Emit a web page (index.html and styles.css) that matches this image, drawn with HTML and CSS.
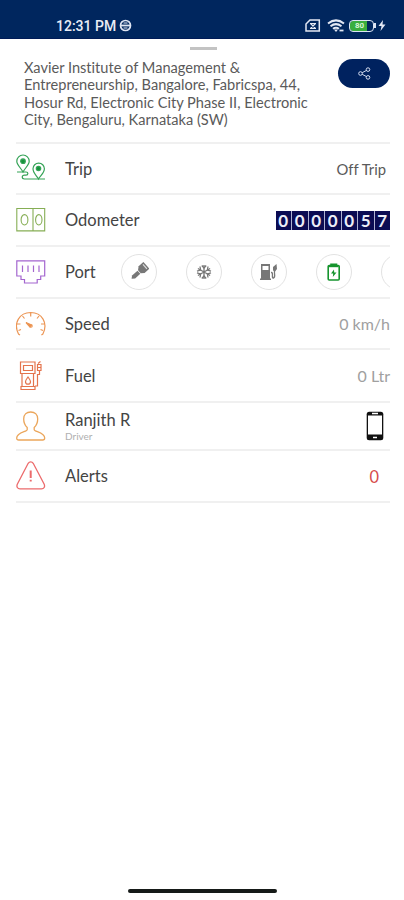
FILE: index.html
```
<!DOCTYPE html>
<html lang="en">
<head>
<meta charset="utf-8">
<title>Vehicle details</title>
<link rel="stylesheet" href="styles.css">
</head>
<body>
<div class="phone">
  <header class="status">
    <span class="clock">12:31 PM</span>
    <svg class="globe" width="13" height="13" viewBox="0 0 13 13" fill="none" stroke="#dfe5f3" stroke-width="1.7"><circle cx="6.5" cy="6.5" r="5"/><path d="M1 6.500h11" stroke-width="1.800"/><path d="M4.500 4h4M4.500 9h4" stroke-width="1"/></svg>
    <div class="indicators">
      <svg width="16" height="13" viewBox="0 0 16 13" fill="none" stroke="#e3e8f4" stroke-width="1.5"><path d="M5 1h9.300v11H1V5z"/><path d="M5.500 4.500l5 5M10.500 4.500l-5 5M5 4.500h6M5 9.500h6" stroke-width="1.200"/></svg>
      <svg class="wifi" width="18" height="14" viewBox="0 0 18 14" fill="none" stroke="#e3e8f4" stroke-width="2"><path d="M1 4.500Q9-1.700 17 4.500M3.500 7.200Q9 3 14.500 7.200M6 9.800Q9 7.600 12 9.800"/><path d="M7 10.500L9 13l2-2.500z" fill="#e3e8f4" stroke="none"/><path d="M12.500 11.500h4" stroke-width="1.800"/></svg>
      <span class="battery"><span class="charge">80</span></span>
      <svg class="bolt" width="8" height="11" viewBox="0 0 8 11" fill="#e3e8f4"><path d="M5 0L.5 6H3.500L2.500 11 7.500 4.500H4.500z"/></svg>
    </div>
  </header>
  <div class="handle"></div>
  <main>
    <section class="place">
      <p class="address">Xavier Institute of Management &amp;<br>Entrepreneurship, Bangalore, Fabricspa, 44,<br>Hosur Rd, Electronic City Phase II, Electronic<br>City, Bengaluru, Karnataka (SW)</p>
      <button class="share" aria-label="Share"><svg width="13" height="13" viewBox="0 0 13 13" fill="none" stroke="#d5ddf0" stroke-width="1"><circle cx="2.500" cy="6.500" r="1.800"/><circle cx="10" cy="2.600" r="1.800"/><circle cx="10" cy="10.400" r="1.800"/><path d="M4.200 5.700l4.100-2.200M4.200 7.300l4.100 2.200"/></svg></button>
    </section>
    <section class="row trip">
      <svg class="icon" viewBox="0 0 30 30" fill="none" stroke="#35a357" stroke-width="1.200"><path d="M7 18C5 14 .8 11 .8 7.200a6.200 6.200 0 0 1 12.400 0C13.200 11 9 14 7 18z"/><circle cx="7" cy="7.200" r="2.300" fill="#15933b"/><path d="M22.500 25C20.500 21.500 17 19 17 14.800a5.700 5.700 0 0 1 11.400 0C28.400 19 24.500 21.500 22.500 25z"/><circle cx="22.500" cy="14.500" r="2.200" fill="#15933b"/><path d="M1 18H10c2.500 0 2.500 3.200 0 3.200H8.500c-3 0-3 3.800 0 3.800H29"/></svg>
      <span class="label">Trip</span><span class="off">Off Trip</span>
    </section>
    <section class="row odometer">
      <svg class="icon" viewBox="0 0 30 30" fill="none" stroke="#86ae55" stroke-width="1.100"><path d="M.8 3.500h27.900v22.400H.8zM17 3.500v22.400"/><ellipse cx="8.500" cy="14.800" rx="3.400" ry="5.200"/><ellipse cx="22.800" cy="14.800" rx="3.200" ry="5.200"/></svg>
      <span class="label">Odometer</span>
      <div class="digits"><b>0</b><b>0</b><b>0</b><b>0</b><b>0</b><b>5</b><b>7</b></div>
    </section>
    <section class="row port">
      <svg class="icon" viewBox="0 0 30 30" fill="none" stroke="#a466cf" stroke-width="1.200"><path d="M.8 3.800h27.900V19h-4v3.500h-3.500V26H8.500v-3.500H5V19H.8zM6.500 8.500v6.500M12 8.500v6.500M17.500 8.500v6.500M23 8.500v6.500"/></svg>
      <span class="label">Port</span>
      <div class="ports">
        <span class="chip"><svg width="20" height="20" viewBox="0 0 20 20" fill="#777"><g transform="rotate(48 10 10)"><path d="M5.500 0h9v6.500l-2.500 3H8l-2.500-3z"/><path d="M7 2h6" stroke="#ddd" stroke-width="1.200"/><path d="M8 10.200h4.200v7L10 20l-2-2.500z"/></g></svg></span>
        <span class="chip"><svg width="18" height="18" viewBox="0 0 18 18" fill="none" stroke="#777" stroke-width="1.300"><path d="M9 2v14M2.900 5.500l12.200 7M15.100 5.500l-12.200 7"/><path d="M6.800 2.500L9 5l2.200-2.500M6.800 15.500L9 13l2.200 2.500M2 8.200l3.600-1.200L5 3.500M16 9.800l-3.600 1.200.6 3.500M16 8.200L12.400 7l.6-3.500M2 9.800L5.600 11 5 14.500"/></svg></span>
        <span class="chip"><svg width="19" height="18" viewBox="0 0 19 18" fill="#777"><path fill-rule="evenodd" d="M2 1h9v14.500h1V17H1v-1.500h1zM3.500 3v4h6V3z"/><path d="M12 9.500c3-.5 0 6 2.500 5.500 3-.5-.5-6 1.500-8" fill="none" stroke="#777" stroke-width="1.300"/><path d="M17.500 1l-3.500 3v3.500l2 1 2-2.500z"/></svg></span>
        <span class="chip"><svg width="14" height="18" viewBox="0 0 14 18" fill="none" stroke="#16942e" stroke-width="1.600"><rect x="1.200" y="2.500" width="11" height="14.500" rx="1"/><path d="M4 1.200h5.500V3H4z" fill="#16942e"/><path d="M2 3.200h9.500" stroke-width="2"/><path d="M7 6.500L4 10.500h2.200l-.4 3.500 3.700-4.500H7.200z" fill="#16942e" stroke="none"/></svg></span>
        <span class="chip"></span>
      </div>
    </section>
    <section class="row speed">
      <svg class="icon" viewBox="0 0 30 30" fill="none" stroke="#ec9655" stroke-width="1.200"><path d="M4 26l-1.500-1C-3 14 3.500 3.500 14.700 3.500S32.400 14 26.900 25l-1.500 1M14.700 3.500v4M6.500 7l2 2.500M23 7l-2 2.500M1 15h3.500M28.500 15H25M2.500 21.500l2.500-1M27 21.500l-2.500-1"/><path d="M10 13.500l5.500 2.500-1.500 2z" fill="#e57f36"/><circle cx="15" cy="17" r="1.200"/></svg>
      <span class="label">Speed</span><span class="value">0 km/h</span>
    </section>
    <section class="row fuel">
      <svg class="icon" viewBox="0 0 30 30" fill="none" stroke="#e4744d" stroke-width="1.200"><path d="M4.500 1h14.500v11.500H4.500zM6 12.500V25.500h11.500V12.500M5 25.500h14v3H5zM7.500 4.500h9v5h-9z"/><path d="M12 16c-1.500 2.200-2.500 3.200-2.500 4.700a2.500 2.500 0 0 0 5 0C14.500 19.200 13.500 18.200 12 16zM19 25h2.500V13.500h2V9.500M22 2.500l2.500-2M21.500 3.500H25v6h-3.500zM21.500 6.500H25"/></svg>
      <span class="label">Fuel</span><span class="value">0 Ltr</span>
    </section>
    <section class="row driver">
      <svg class="icon" viewBox="0 0 30 30" fill="none" stroke="#eba65b" stroke-width="1.300"><path d="M11.200 16.500C8.500 14 7.700 11.500 7.700 8c0-4.500 3-7 7-7s7 2.500 7 7c0 3.500-.8 6-3.500 8.500v2.200c0 2 10.500 2.500 10.500 8.300 0 1.500-.7 2-2 2h-24c-1.300 0-2-.5-2-2 0-5.800 10.500-6.300 10.500-8.300z"/></svg>
      <div class="person"><span class="label">Ranjith R</span><small>Driver</small></div>
      <svg class="mobile" width="18" height="30" viewBox="0 0 18 30"><rect x=".7" y=".7" width="16.600" height="28.600" rx="2.500" fill="#111"/><path d="M2 4.500h14v19H2z" fill="#fff"/><path d="M6 2.500h6M7 26.500h4" stroke="#fff" stroke-width="1.500"/></svg>
    </section>
    <section class="row alerts">
      <svg class="icon" viewBox="0 0 30 30" fill="none" stroke="#ec6b6c" stroke-width="1.300"><path d="M12.200 2.300c1.200-2 3.800-2 5 0l11 21c1 2.500-.2 4.500-2.700 4.500H4c-2.500 0-3.700-2-2.700-4.500z"/><path d="M14.700 9.500v7.500M14.700 18.800v1.700" stroke-width="2"/></svg>
      <span class="label">Alerts</span><span class="count">0</span>
    </section>
  </main>
  <div class="homebar"></div>
</div>
</body>
</html>
```
FILE: styles.css
```
* { box-sizing: border-box; }
body { margin: 0; background: #fff; font-family: Lato, sans-serif; font-variant-ligatures: none; }
.phone { width: 404px; height: 900px; display: flex; flex-direction: column; overflow: hidden; }
.status { height: 39px; flex: none; background: #00265e; border-bottom: 1px solid #001b57; display: flex; align-items: center; padding: 13px 18px 0 56px; }
.clock { font: 500 14px/16px Roboto, sans-serif; color: #e9edf6; width: 60px; white-space: nowrap; }
.globe { margin-left: 3px; }
.indicators { margin-left: auto; display: flex; align-items: center; }
.wifi { margin-left: 6px; }
.battery { width: 25px; height: 12px; margin-left: 4px; border: 1.5px solid #dce4f3; border-radius: 4px; background: linear-gradient(90deg, #39ae3e 75%, #00265e 75%); background-clip: padding-box; display: flex; align-items: center; padding-left: 5px; }
.battery::after { content: ""; width: 2px; height: 5px; background: #dce4f3; margin-left: auto; margin-right: -3px; }
.charge { font: bold 8px/9px Roboto, sans-serif; color: #d9f5d9; }
.bolt { margin-left: 4px; }
.handle { flex: none; width: 27px; height: 3px; margin: 8px auto 0; background: #c3c3c3; transform: translateX(1px); }
main { padding: 0 14px 0 16px; }
.place { height: 94px; display: flex; justify-content: space-between; align-items: flex-start; padding: 9px 0 0 8px; border-bottom: 2px solid #f0f0f0; }
.address { margin: 0; font-size: 14.6px; line-height: 17.3px; color: #5a5a5a; white-space: nowrap; }
.share { width: 52px; height: 29px; flex: none; border: 0; border-radius: 15px; padding: 0; background: #00225f; display: flex; align-items: center; justify-content: center; }
.row { display: flex; align-items: center; border-bottom: 2px solid #f0f0f0; }
.icon { width: 30px; height: 30px; flex: none; margin-right: 19px; }
.label { font-size: 16.5px; line-height: 20px; color: #444; white-space: nowrap; }
.person { display: flex; flex-direction: column; }
.person small { font-size: 10px; line-height: 12px; color: #b0b0b0; }
.person .label { line-height: 20px; }
.trip { height: 51px; }
.odometer { height: 52px; }
.port { height: 52px; }
.speed { height: 51px; }
.fuel { height: 53px; }
.driver { height: 48px; }
.alerts { height: 52px; }
.off { margin-left: auto; margin-right: 4px; font-size: 14.8px; color: #5a5a5a; }
.value { margin-left: auto; font-size: 16px; color: #a0a0a0; }
.digits { margin-left: auto; display: flex; gap: 1px; background: #aeb2d0; }
.digits b { width: 15.500px; height: 19px; background: #0b0c53; color: #eceef8; font-size: 17px; line-height: 19px; text-align: center; }
.ports { margin-left: 25px; flex: 1; display: flex; gap: 29px; overflow: hidden; }
.chip { width: 36px; height: 36px; flex: none; border: 1.500px solid #e2e2e2; border-radius: 50%; display: flex; align-items: center; justify-content: center; }
.mobile { margin-left: auto; margin-right: 6px; }
.count { margin-left: auto; margin-right: 11px; font-size: 16.4px; color: #d64b4b; }
.homebar { width: 149px; height: 4px; margin: auto auto 7px; border-radius: 2px; background: #161a18; }
```
